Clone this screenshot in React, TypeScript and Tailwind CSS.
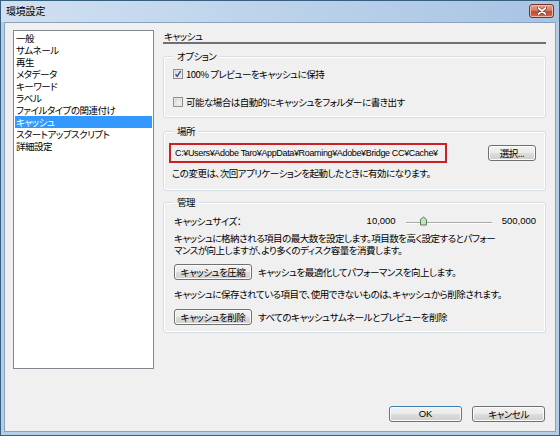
import React from "react";

const items = [
  "一般",
  "サムネール",
  "再生",
  "メタデータ",
  "キーワード",
  "ラベル",
  "ファイルタイプの関連付け",
  "キャッシュ",
  "スタートアップスクリプト",
  "詳細設定",
];

function WinButton({ children, className = "" }: { children: React.ReactNode; className?: string }) {
  return (
    <div
      className={
        "flex items-center justify-center h-[16px] rounded-[3px] border border-[#707070] bg-[linear-gradient(#f2f2f2,#ebebeb_50%,#dddddd_50%,#cfcfcf)] shadow-[inset_0_0_0_1px_#fbfbfb] leading-[12px] whitespace-nowrap " +
        className
      }
    >
      {children}
    </div>
  );
}

function Group({ label, className = "", children }: { label: string; className?: string; children: React.ReactNode }) {
  return (
    <div className={"relative border border-[#d5dfe5] rounded-[3px] shadow-[inset_0_0_0_1px_#ffffff] " + className}>
      <span className="absolute left-[10px] top-[-7px] px-[3px] bg-[#f0f0f0] leading-[12px]">{label}</span>
      {children}
    </div>
  );
}

function CheckBox({ checked }: { checked: boolean }) {
  return (
    <svg width="10" height="10" viewBox="0 0 10 10" className="shrink-0">
      <defs>
        <linearGradient id={checked ? "cbg1" : "cbg2"} x1="0" y1="0" x2="1" y2="1">
          <stop offset="0" stopColor="#dcdcdc" />
          <stop offset="1" stopColor="#fbfbfb" />
        </linearGradient>
      </defs>
      <rect x="0.5" y="0.5" width="9" height="9" fill="#f4f4f4" stroke="#8e8f8f" />
      <rect x="2" y="2" width="6" height="6" fill={checked ? "url(#cbg1)" : "url(#cbg2)"} stroke="#c4c4c4" strokeWidth="0.5" />
      {checked && (
        <path d="M2.6 5.2 L4.2 7.4 L7.6 2.2" fill="none" stroke="#3b4f99" strokeWidth="1.5" strokeLinejoin="round" />
      )}
    </svg>
  );
}

export default function App() {
  return (
    <div className="w-[560px] h-[436px] flex flex-col bg-[#b6cde6] border border-[#365f80] font-['Noto_Sans_CJK_JP','Noto_Sans',sans-serif] text-[9.5px] tracking-[-0.5px] text-black [font-feature-settings:'palt'] overflow-hidden select-none">
      {/* title bar */}
      <div className="h-[21px] shrink-0 flex items-start justify-between pl-[5px] pr-[5px] bg-linear-to-r from-[#d0e0f1] to-[#a8c4e4]">
        <span className="mt-[4px] leading-[12px] text-[10px] tracking-[-0.2px]">環境設定</span>
        <div className="mt-[3px] w-[25px] h-[14px] rounded-[3px] border border-[#7a3328] bg-[linear-gradient(#e7a595,#d77a66_45%,#c14a33_55%,#cf6a4f)] flex items-center justify-center shadow-[inset_0_0_0_1px_#f0b8a8]">
          <svg width="10" height="8" viewBox="0 0 10 8">
            <path d="M1.5 1 L8.5 7 M8.5 1 L1.5 7" stroke="#6b2a22" strokeWidth="3" strokeLinecap="round" />
            <path d="M1.5 1 L8.5 7 M8.5 1 L1.5 7" stroke="#ffffff" strokeWidth="1.8" strokeLinecap="round" />
          </svg>
        </div>
      </div>

      {/* client area */}
      <div className="flex-1 mx-[3px] mb-[3px] bg-[#f0f0f0] border border-[#8aa3bd] flex flex-col pl-[8px] pr-[9px] pt-[7px]">
        <div className="flex gap-[9px]">
          {/* list */}
          <div className="w-[141px] h-[339px] shrink-0 bg-white border border-[#828790] pt-[1px]">
            {items.map((it) =>
              it === "キャッシュ" ? (
                <div key={it} className="h-[12px] leading-[12px] mx-[1px] pl-[1px] bg-[#3399ff] text-white">
                  {it}
                </div>
              ) : (
                <div key={it} className="h-[12px] leading-[12px] pl-[2px]">
                  {it}
                </div>
              )
            )}
          </div>

          {/* right panel */}
          <div className="w-[383px] flex flex-col">
            <div className="h-[14px] leading-[12px] pl-[1px] border-b-2 border-[#707070]">キャッシュ</div>

            <Group label="オプション" className="mt-[12px] h-[62px] pt-[11px] pl-[9px]">
              <div className="flex items-center gap-[3px] h-[12px] leading-[12px]">
                <CheckBox checked={true} />
                <span>100% プレビューをキャッシュに保持</span>
              </div>
              <div className="flex items-center gap-[3px] h-[12px] leading-[12px] mt-[16px]">
                <CheckBox checked={false} />
                <span>可能な場合は自動的にキャッシュをフォルダーに書き出す</span>
              </div>
            </Group>

            <Group label="場所" className="mt-[13px] h-[60px] pt-[11px] pl-[5px] pr-[9px]">
              <div className="flex items-center justify-between">
                <div className="w-[278px] h-[20px] border-2 border-[#cc2027] flex items-center pl-[4px] leading-[12px] whitespace-nowrap overflow-hidden font-['Liberation_Sans',sans-serif] text-[9px] tracking-[-0.35px]">
                  C:¥Users¥Adobe Taro¥AppData¥Roaming¥Adobe¥Bridge CC¥Cache¥
                </div>
                <WinButton className="w-[48px]">選択...</WinButton>
              </div>
              <div className="mt-[4px] pl-[3px] leading-[12px] whitespace-nowrap">
                この変更は、次回アプリケーションを起動したときに有効になります。
              </div>
            </Group>

            <Group label="管理" className="mt-[11px] h-[131px] pt-[12px] pl-[10px] pr-[9px]">
              <div className="flex items-center h-[12px] leading-[12px]">
                <span>キャッシュサイズ：</span>
                <span className="ml-auto font-['Liberation_Sans',sans-serif] text-[9.5px] tracking-normal">10,000</span>
                <svg width="86" height="12" viewBox="0 0 86 12" className="ml-[10px] mr-[10px]">
                  <line x1="0" y1="7.5" x2="86" y2="7.5" stroke="#a8a8a8" strokeWidth="1" />
                  <line x1="0" y1="8.5" x2="86" y2="8.5" stroke="#ffffff" strokeWidth="1" />
                  <path d="M17.5 2 L20.5 4.5 L20.5 10 L14.5 10 L14.5 4.5 Z" fill="#bfe6b4" stroke="#5c7a66" strokeWidth="1" />
                </svg>
                <span className="font-['Liberation_Sans',sans-serif] text-[9.5px] tracking-normal">500,000</span>
              </div>
              <div className="mt-[5px] leading-[12px] whitespace-nowrap">
                <div>キャッシュに格納される項目の最大数を設定します。項目数を高く設定するとパフォー</div>
                <div>マンスが向上しますが、より多くのディスク容量を消費します。</div>
              </div>
              <div className="mt-[8px] flex items-center gap-[6px]">
                <WinButton className="w-[78px]">キャッシュを圧縮</WinButton>
                <span className="leading-[12px] whitespace-nowrap">キャッシュを最適化してパフォーマンスを向上します。</span>
              </div>
              <div className="mt-[8px] leading-[12px] whitespace-nowrap">
                キャッシュに保存されている項目で、使用できないものは、キャッシュから削除されます。
              </div>
              <div className="mt-[9px] flex items-center gap-[6px]">
                <WinButton className="w-[78px]">キャッシュを削除</WinButton>
                <span className="leading-[12px] whitespace-nowrap">すべてのキャッシュサムネールとプレビューを削除</span>
              </div>
            </Group>
          </div>
        </div>

        {/* bottom buttons */}
        <div className="mt-[37px] flex justify-end gap-[10px] pr-[1px]">
          <WinButton className="w-[73px] !border-[#3c7fb1] shadow-[inset_0_0_0_1px_#a6dcf5]">
            <span className="font-['Liberation_Sans',sans-serif] text-[9.5px] tracking-normal">OK</span>
          </WinButton>
          <WinButton className="w-[73px]">キャンセル</WinButton>
        </div>
      </div>
    </div>
  );
}
